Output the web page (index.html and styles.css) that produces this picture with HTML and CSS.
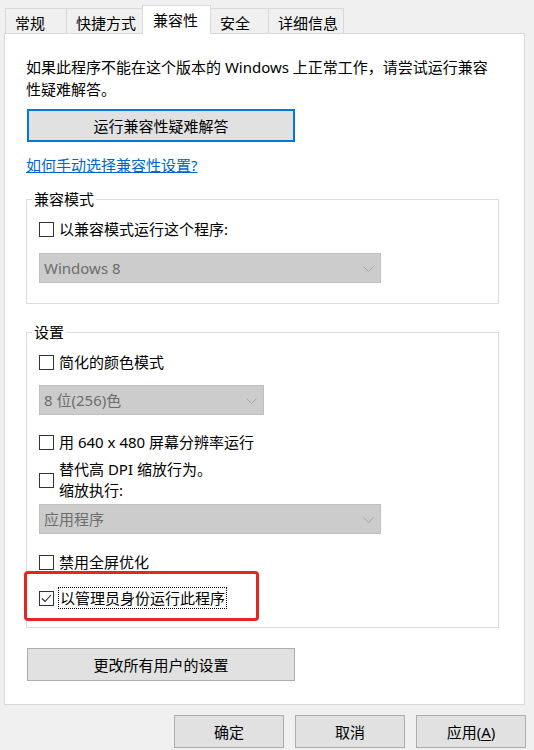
FILE: index.html
```html
<!DOCTYPE html>
<html lang="zh-CN">
<head>
<meta charset="utf-8">
<link rel="stylesheet" href="styles.css">
</head>
<body>
<div class="window">
  <div class="tabs">
    <div class="tab t1">常规</div>
    <div class="tab t2">快捷方式</div>
    <div class="tab t3 active">兼容性</div>
    <div class="tab t4">安全</div>
    <div class="tab t5">详细信息</div>
  </div>
  <div class="panel">
    <p class="intro">如果此程序不能在这个版本的 Windows 上正常工作，请尝试运行兼容<br>性疑难解答。</p>
    <button class="btn primary wide">运行兼容性疑难解答</button>
    <a class="link" href="#">如何手动选择兼容性设置?</a>

    <fieldset class="group g1">
      <legend>兼容模式</legend>
      <div class="group-body">
        <div class="row"><span class="box"></span><span class="label">以兼容模式运行这个程序:</span></div>
        <div class="select s-wide mt13"><span>Windows 8</span><svg class="chev" width="11" height="6" viewBox="0 0 11 6"><polyline points="0.5,0.5 5.5,5.5 10.5,0.5" fill="none" stroke="#a6a6a6" stroke-width="1"/></svg></div>
      </div>
    </fieldset>

    <fieldset class="group g2">
      <legend>设置</legend>
      <div class="group-body b2">
        <div class="row"><span class="box"></span><span class="label">简化的颜色模式</span></div>
        <div class="select s-narrow mt12"><span>8 位(256)色</span><svg class="chev" width="11" height="6" viewBox="0 0 11 6"><polyline points="0.5,0.5 5.5,5.5 10.5,0.5" fill="none" stroke="#a6a6a6" stroke-width="1"/></svg></div>
        <div class="row mt16"><span class="box"></span><span class="label">用 640 x 480 屏幕分辨率运行</span></div>
        <div class="row two mt6"><span class="box"></span><span class="label">替代高 DPI 缩放行为。<br>缩放执行:</span></div>
        <div class="select s-wide mt3"><span>应用程序</span><svg class="chev" width="11" height="6" viewBox="0 0 11 6"><polyline points="0.5,0.5 5.5,5.5 10.5,0.5" fill="none" stroke="#a6a6a6" stroke-width="1"/></svg></div>
        <div class="row mt17"><span class="box"></span><span class="label">禁用全屏优化</span></div>
        <div class="row mt14 highlight">
          <span class="box checked"><svg width="13" height="13" viewBox="0 0 13 13"><polyline points="2,6.5 5,9.5 11,3" fill="none" stroke="#222" stroke-width="1.1"/></svg></span>
          <span class="label focus">以管理员身份运行此程序</span>
          <span class="redmark"></span>
        </div>
      </div>
    </fieldset>

    <button class="btn wide all">更改所有用户的设置</button>
  </div>
  <div class="footer">
    <button class="btn small">确定</button>
    <button class="btn small">取消</button>
    <button class="btn small">应用(<u>A</u>)</button>
  </div>
</div>
</body>
</html>
```
FILE: styles.css
```css
* { box-sizing: border-box; }
html, body { margin: 0; padding: 0; }
body {
  width: 534px;
  height: 750px;
  overflow: hidden;
  background: #f0f0f0;
  font-family: "Noto Sans", "Noto Sans CJK SC", sans-serif;
  font-size: 15px;
  color: #000;
}
.window { width: 534px; }

.tabs {
  display: flex;
  align-items: flex-end;
  height: 33px;
  padding-left: 5px;
}
.tab {
  height: 25px;
  margin-left: -1px;
  padding: 4px 0 0 9px;
  line-height: 21px;
  border: 1px solid #d9d9d9;
  border-bottom: none;
  background: #f0f0f0;
  white-space: nowrap;
}
.tab:first-child { margin-left: 0; }
.t1 { width: 62px; }
.t2 { width: 77px; }
.t3 { width: 69px; }
.t4 { width: 59px; }
.t5 { width: 76px; }
.tab.active {
  height: 29px;
  margin-bottom: -1px;
  padding-left: 10px;
  background: #fff;
  position: relative;
  z-index: 2;
}

.panel {
  margin-left: 4px;
  width: 521px;
  background: #fff;
  border: 1px solid #d9d9d9;
  padding: 22px 25px 23px 21px;
  position: relative;
  z-index: 1;
}
.intro {
  margin: 0;
  line-height: 22px;
  white-space: nowrap;
}
.btn {
  display: block;
  font-family: inherit;
  font-size: 15px;
  color: #000;
  background: #e1e1e1;
  border: 1px solid #adadad;
  padding: 0;
  margin: 0;
  height: 33px;
  line-height: 30px;
  text-align: center;
}
.btn.wide { width: 268px; margin-left: 1px; }
.btn.primary { border: 2px solid #0078d7; margin-top: 9px; }
.btn.all { margin-top: 20px; }
.link {
  display: block;
  margin-top: 12px;
  line-height: 22px;
  color: #0066cc;
  text-decoration: underline;
  width: max-content;
}

.group {
  margin: 0;
  padding: 0;
  border: 1px solid #dcdcdc;
  min-width: 0;
}
.g1 { margin-top: 12px; }
.g2 { margin-top: 17px; }
.group legend {
  padding: 0 2px;
  margin-left: 5px;
  line-height: 22px;
}
.group-body { padding: 8px 0 20px 12px; }
.group-body.b2 { padding-bottom: 18px; }

.row {
  display: flex;
  align-items: center;
  line-height: 22px;
  position: relative;
}
.row.two { line-height: 21px; }
.box {
  flex: none;
  width: 15px;
  height: 15px;
  border: 1px solid #333;
  background: #fff;
  display: flex;
  align-items: center;
  justify-content: center;
}
.label { margin-left: 5px; white-space: nowrap; }
.label.focus {
  margin-left: 4px;
  line-height: 20px;
  padding: 0 1px;
  border: 1px dotted #000;
}
.redmark {
  position: absolute;
  left: -15px;
  top: -16px;
  width: 235px;
  height: 50px;
  border: 3px solid #e3261f;
  border-radius: 4px;
  pointer-events: none;
}

.select {
  height: 30px;
  background: #cccccc;
  border: 1px solid #bfbfbf;
  color: #6d6d6d;
  display: flex;
  align-items: center;
  justify-content: space-between;
  padding: 0 6px 0 4px;
  line-height: 22px;
}
.s-wide { width: 342px; }
.s-narrow { width: 225px; }
.chev { display: block; margin-top: 1px; }

.mt3 { margin-top: 3px; }
.mt6 { margin-top: 6px; }
.mt12 { margin-top: 12px; }
.mt13 { margin-top: 13px; }
.mt14 { margin-top: 14px; }
.mt16 { margin-top: 16px; }
.mt17 { margin-top: 17px; }

.footer {
  display: flex;
  justify-content: flex-end;
  gap: 11px;
  padding: 10px 8px 0 0;
}
.btn.small { width: 110px; }
.footer u { text-underline-offset: 2px; }
```
